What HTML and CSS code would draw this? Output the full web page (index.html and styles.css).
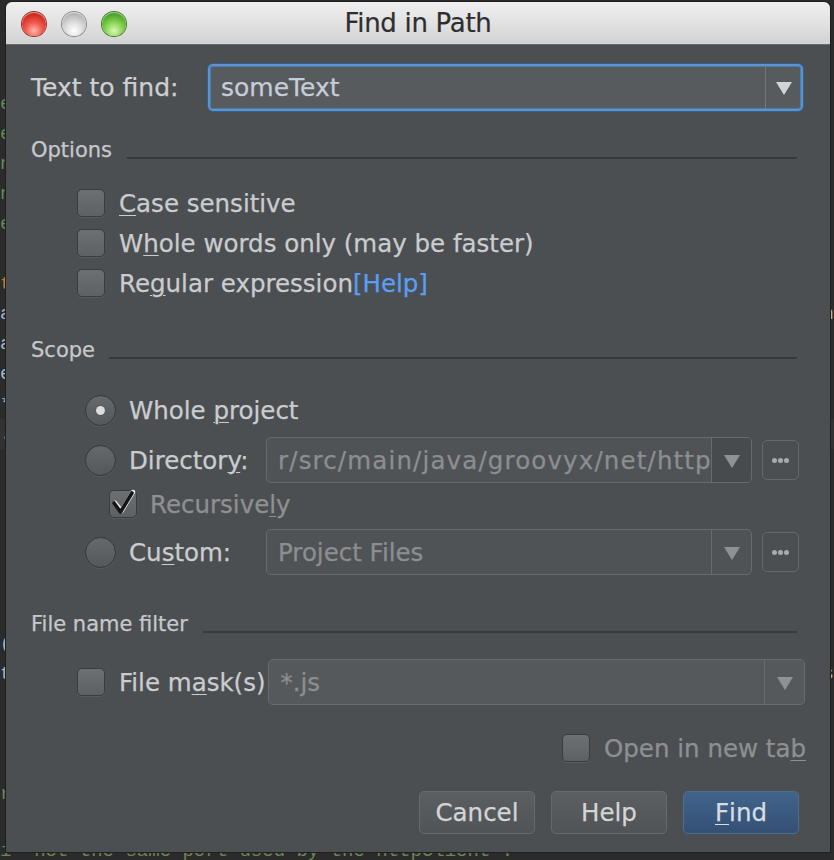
FILE: index.html
```html
<!DOCTYPE html>
<html>
<head>
<meta charset="utf-8">
<link rel="stylesheet" href="styles.css">
</head>
<body>
<div class="code">
  <div class="cl"><span class="g">e</span><span></span></div>
  <div class="cl"><span class="g">e</span><span></span></div>
  <div class="cl"><span class="g">n</span><span></span></div>
  <div class="cl"><span class="g">n</span><span></span></div>
  <div class="cl"><span class="g">e</span><span></span></div>
  <div class="cl"><span></span><span></span></div>
  <div class="cl"><span class="o">t</span><span></span></div>
  <div class="cl"><span>a</span><span>n</span></div>
  <div class="cl"><span>a</span><span></span></div>
  <div class="cl"><span>e</span><span></span></div>
  <div class="cl"><span>*</span><span></span></div>
  <div class="cl hl"><span>.</span><span></span></div>
  <div class="cl"><span></span><span></span></div>
  <div class="cl"><span></span><span></span></div>
  <div class="cl"><span></span><span></span></div>
  <div class="cl"><span></span><span></span></div>
  <div class="cl"><span></span><span></span></div>
  <div class="cl"><span></span><span></span></div>
  <div class="cl"><span>(</span><span></span></div>
  <div class="cl"><span>t</span><span>s</span></div>
  <div class="cl"><span></span><span></span></div>
  <div class="cl"><span></span><span></span></div>
  <div class="cl"><span></span><span></span></div>
  <div class="cl"><span class="g">r</span><span></span></div>
  <div class="cl"><span></span><span></span></div>
  <div class="cl last"><span class="g">i  not the same port used by the httpClient .</span><span></span></div>
</div>

<div class="window">
  <div class="titlebar">
    <div class="lights">
      <span class="light red"></span>
      <span class="light gray"></span>
      <span class="light green"></span>
    </div>
    <div class="title">Find in Path</div>
    <div></div>
  </div>

  <div class="content">
    <div class="find-row">
      <span class="find-label">Text to find:</span>
      <div class="combo combo-focus">
        <span class="combo-text text-find">someText</span>
        <span class="combo-arrow"><span class="tri"></span></span>
      </div>
    </div>

    <div class="section-head head-options">
      <span class="head-text">Options</span><span class="rule"></span>
    </div>
    <div class="check-list">
      <div class="check-row"><span class="cb"></span><span class="lbl"><u>C</u>ase sensitive</span></div>
      <div class="check-row"><span class="cb"></span><span class="lbl">W<u>h</u>ole words only (may be faster)</span></div>
      <div class="check-row"><span class="cb"></span><span class="lbl">Re<u>g</u>ular expression<span class="link">[Help]</span></span></div>
    </div>

    <div class="section-head head-scope">
      <span class="head-text">Scope</span><span class="rule"></span>
    </div>

    <div class="radio-row whole-row">
      <span class="radio selected"><span class="dot"></span></span>
      <span class="lbl">Whole <u>p</u>roject</span>
    </div>
    <div class="radio-row field-row">
      <span class="radio"></span>
      <span class="lbl field-lbl">Director<u>y</u>:</span>
      <div class="combo combo-disabled">
        <span class="combo-text dim path">r/src/main/java/groovyx/net/http</span>
        <span class="combo-arrow dark"><span class="tri dim-tri"></span></span>
      </div>
      <span class="more"><i></i><i></i><i></i></span>
    </div>
    <div class="recursive-row">
      <span class="cb checked">
        <svg width="30" height="32" viewBox="0 0 30 32">
          <path d="M6 17 L12.5 25 L24 6" fill="none" stroke="#e8e8e8" stroke-width="4.5" stroke-linecap="round" stroke-linejoin="round"/>
          <path d="M5 17 L11.5 26 L23 7" fill="none" stroke="#151515" stroke-width="3.6" stroke-linecap="round" stroke-linejoin="round"/>
        </svg>
      </span>
      <span class="lbl dim-lbl">Recursive<u>l</u>y</span>
    </div>
    <div class="radio-row field-row custom-row">
      <span class="radio"></span>
      <span class="lbl field-lbl">Cu<u>s</u>tom:</span>
      <div class="combo combo-disabled">
        <span class="combo-text dim">Project Files</span>
        <span class="combo-arrow"><span class="tri dim-tri"></span></span>
      </div>
      <span class="more"><i></i><i></i><i></i></span>
    </div>

    <div class="section-head head-file">
      <span class="head-text">File name filter</span><span class="rule"></span>
    </div>

    <div class="mask-row">
      <span class="cb"></span>
      <span class="lbl">File m<u>a</u>sk(s)</span>
      <div class="combo combo-mask">
        <span class="combo-text dim">*.js</span>
        <span class="combo-arrow"><span class="tri dim-tri"></span></span>
      </div>
    </div>

    <div class="open-row">
      <span class="cb"></span>
      <span class="lbl dim-lbl">Open in new ta<u>b</u></span>
    </div>

    <div class="buttons">
      <span class="btn">Cancel</span>
      <span class="btn">Help</span>
      <span class="btn btn-default"><u>F</u>ind</span>
    </div>
  </div>
</div>
</body>
</html>
```

FILE: styles.css
```css
* { box-sizing: border-box; }

html, body {
  margin: 0;
  padding: 0;
}

body {
  width: 834px;
  height: 860px;
  overflow: hidden;
  position: relative;
  background: #2b2b2b;
  font-family: "DejaVu Sans", "Noto Sans", sans-serif;
}

/* editor text behind the dialog */
.code {
  padding-top: 89px;
  font-family: "Liberation Mono", monospace;
  font-size: 19px;
  line-height: 30px;
  color: #a9b7c6;
}
.cl {
  display: flex;
  justify-content: space-between;
  height: 30px;
  white-space: pre;
}
.cl.last { line-height: 24px; height: 24px; }
.cl.hl { background: #323232; }
.g { color: #6a8759; }
.o { color: #cc7832; }

/* dialog window */
.window {
  position: absolute;
  left: 6px;
  top: 2px;
  width: 824px;
  height: 850px;
  background: #4c4f52;
  border-radius: 6px 6px 0 0;
  box-shadow: 0 0 0 1px #1e1e1e;
  overflow: hidden;
}

.titlebar {
  height: 43px;
  display: grid;
  grid-template-columns: 1fr auto 1fr;
  align-items: center;
  background: linear-gradient(#efefef, #e2e2e2 50%, #d2d2d2);
  border-bottom: 1px solid #6a6a6a;
}
.lights {
  display: flex;
  gap: 16px;
  padding-left: 16px;
  padding-top: 1px;
}
.light {
  width: 24px;
  height: 24px;
  border-radius: 50%;
  display: block;
}
.light.red {
  background: radial-gradient(circle at 50% 78%, #ffb7ae 0, #f0584c 38%, #d22e22 70%, #8e1d15 100%);
  box-shadow: inset 0 1px 1px rgba(255,255,255,.5), 0 0 0 1px #9c2b22;
}
.light.gray {
  background: radial-gradient(circle at 50% 78%, #ffffff 0, #dcdcdc 40%, #b8b8b8 72%, #8c8c8c 100%);
  box-shadow: inset 0 1px 1px rgba(255,255,255,.6), 0 0 0 1px #8a8a8a;
}
.light.green {
  background: radial-gradient(circle at 50% 78%, #d8f7b5 0, #86d253 40%, #4ea72a 72%, #2f6e16 100%);
  box-shadow: inset 0 1px 1px rgba(255,255,255,.5), 0 0 0 1px #3b7d23;
}
.title {
  font-size: 26px;
  color: #2e2e2e;
  letter-spacing: -0.3px;
  -webkit-text-stroke: 0.2px #2e2e2e;
}

.content {
  padding: 0 27px 0 25px;
  color: #cacccf;
  font-size: 24.5px;
  -webkit-text-stroke: 0.25px currentColor;
}

u {
  text-decoration: underline;
  text-underline-offset: 3px;
  text-decoration-thickness: 1px;
}

/* Text to find */
.find-row {
  margin-top: 19px;
  height: 47px;
  display: flex;
  align-items: center;
}
.find-label {
  width: 177px;
  flex: none;
  font-size: 25px;
  color: #cdd0d2;
}

.combo {
  display: flex;
  align-items: stretch;
  height: 100%;
  border-radius: 5px;
  overflow: hidden;
  flex: 1;
  min-width: 0;
}
.combo-text {
  flex: 1;
  min-width: 0;
  display: flex;
  align-items: center;
  padding-left: 11px;
  white-space: nowrap;
  overflow: hidden;
}
.combo-arrow {
  flex: none;
  width: 38px;
  display: flex;
  align-items: center;
  justify-content: center;
  border-left: 1px solid #6b6e71;
}
.tri {
  width: 0;
  height: 0;
  border-left: 8px solid transparent;
  border-right: 8px solid transparent;
  border-top: 13px solid #d2d3d4;
  margin-top: 2px;
}
.dim-tri { border-top-color: #8f9193; }

.combo-focus {
  flex: 1;
  height: 47px;
  border: 2px solid #5b94d2;
  box-shadow: 0 0 0 1px #3a5f86, inset 0 0 0 1px #4d7aa8;
  background: #585b5e;
}
.combo-focus .combo-arrow { width: 36px; border-left-color: #747779; }
.text-find {
  padding-left: 11px;
  color: #c5ced8;
  font-size: 25px;
}

.combo-disabled {
  height: 46px;
  border: 1px solid #686b6e;
  background: #505356;
}
.combo-disabled .combo-arrow { width: 40px; border-left-color: #686b6e; }
.combo-arrow.dark { background: #484b4e; }
.dim { color: #8c8e91; }
.path { letter-spacing: 1.15px; }

/* section headers */
.section-head {
  height: 28px;
  display: flex;
  align-items: flex-start;
}
.head-text {
  font-size: 21px;
  line-height: 28px;
  color: #c6c8ca;
  white-space: nowrap;
}
.rule {
  flex: 1;
  height: 2px;
  margin: 21px 6px 0 15px;
  background: #37393b;
}
.head-options { margin-top: 25px; }
.head-scope { margin-top: 33px; }
.head-scope .rule { margin-left: 14px; }
.head-file { margin-top: 35px; }
.head-file .rule { margin-left: 15px; }

/* checkboxes */
.check-list {
  margin-top: 19px;
  padding-left: 46px;
}
.check-row {
  height: 40px;
  display: flex;
  align-items: center;
  gap: 14px;
}
.cb {
  flex: none;
  width: 28px;
  height: 28px;
  border-radius: 5px;
  background: linear-gradient(#6d7073, #5e6164);
  border: 1px solid #3a3c3f;
  box-shadow: 0 1px 0 #585b5e;
  position: relative;
}
.lbl { white-space: nowrap; }
.link { color: #5a9ef5; }

/* radios */
.radio-row {
  display: flex;
  align-items: center;
  padding-left: 54px;
}
.whole-row {
  margin-top: 26px;
  height: 40px;
  gap: 13px;
}
.radio {
  flex: none;
  width: 31px;
  height: 31px;
  border-radius: 50%;
  background: linear-gradient(#66696c, #55585b);
  border: 1px solid #36383a;
  box-shadow: 0 1px 0 #57595c;
  display: flex;
  align-items: center;
  justify-content: center;
}
.dot {
  width: 9px;
  height: 9px;
  border-radius: 50%;
  background: #dcdcdc;
  box-shadow: 0 0 1px #333;
}
.field-row {
  margin-top: 7px;
  height: 46px;
  padding-right: 4px;
}
.field-row .radio { margin-right: 13px; }
.field-lbl {
  width: 137px;
  flex: none;
}
.more {
  flex: none;
  width: 37px;
  height: 40px;
  margin-left: 10px;
  border: 1px solid #65686b;
  border-radius: 5px;
  display: flex;
  align-items: center;
  justify-content: center;
  gap: 1px;
}
.more i {
  width: 5px;
  height: 5px;
  border-radius: 50%;
  background: #a9abad;
}

.recursive-row {
  margin-top: 3px;
  height: 36px;
  padding-left: 78px;
  display: flex;
  align-items: center;
  gap: 13px;
}
.cb.checked svg {
  position: absolute;
  left: -1px;
  top: -5px;
  overflow: visible;
}
.dim-lbl { color: #8e9093; }

/* file mask */
.mask-row {
  margin-top: 21px;
  height: 46px;
  padding-left: 46px;
  margin-right: -2px;
  display: flex;
  align-items: center;
}
.mask-row .cb { margin-right: 14px; }
.combo-mask {
  margin-left: 2px;
  height: 46px;
  border: 1px solid #696c6f;
  background: #56595c;
}
.combo-mask .combo-arrow { width: 40px; border-left-color: #696c6f; }
.combo-mask .combo-text { padding-left: 12px; }

.open-row {
  margin-top: 28px;
  height: 30px;
  margin-right: -3px;
  display: flex;
  justify-content: flex-end;
  align-items: center;
  gap: 14px;
}

.buttons {
  margin-top: 28px;
  height: 43px;
  padding-right: 4px;
  display: flex;
  justify-content: flex-end;
  gap: 16px;
}
.btn {
  width: 116px;
  height: 43px;
  border-radius: 5px;
  border: 1px solid #686b6e;
  background: linear-gradient(#5b5f62, #505457);
  color: #d3d5d7;
  display: flex;
  align-items: center;
  justify-content: center;
}
.btn-default {
  background: linear-gradient(#41648b, #344f74);
  border-color: #4d6d93;
  color: #d7dde4;
}
```
